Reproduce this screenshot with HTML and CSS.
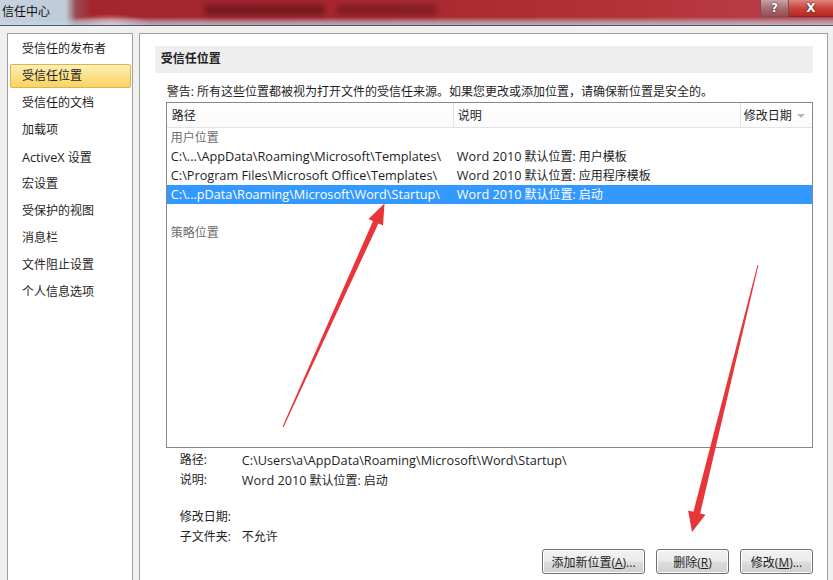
FILE: index.html
```html
<!DOCTYPE html>
<html lang="zh-CN">
<head>
<meta charset="utf-8">
<title>信任中心</title>
<link rel="stylesheet" href="styles.css">
</head>
<body>
<div class="titlebar">
  <span class="title">信任中心</span>
  <div class="behind"><div class="behind-text a"></div><div class="behind-text b"></div></div>
  <div class="caption-btns">
    <div class="cb help">?</div>
    <div class="cb close">X</div>
  </div>
</div>
<div class="main">
  <nav class="side">
    <div class="nav-item">受信任的发布者</div>
    <div class="nav-item active">受信任位置</div>
    <div class="nav-item">受信任的文档</div>
    <div class="nav-item">加载项</div>
    <div class="nav-item"><span class="lat">ActiveX</span> 设置</div>
    <div class="nav-item">宏设置</div>
    <div class="nav-item">受保护的视图</div>
    <div class="nav-item">消息栏</div>
    <div class="nav-item">文件阻止设置</div>
    <div class="nav-item">个人信息选项</div>
  </nav>
  <section class="content">
    <div class="section-head">受信任位置</div>
    <p class="warning">警告: 所有这些位置都被视为打开文件的受信任来源。如果您更改或添加位置，请确保新位置是安全的。</p>
    <div class="table">
      <div class="thead">
        <div class="th c1">路径</div>
        <div class="th c2">说明</div>
        <div class="th c3">修改日期<span class="sort"></span></div>
      </div>
      <div class="tbody">
        <div class="group">用户位置</div>
        <div class="row"><div class="c1 lat">C:\...\AppData\Roaming\Microsoft\Templates\</div><div class="c2"><span class="lat">Word 2010</span> 默认位置: 用户模板</div><div class="c3"></div></div>
        <div class="row"><div class="c1 lat">C:\Program Files\Microsoft Office\Templates\</div><div class="c2"><span class="lat">Word 2010</span> 默认位置: 应用程序模板</div><div class="c3"></div></div>
        <div class="row selected"><div class="c1 lat">C:\...pData\Roaming\Microsoft\Word\Startup\</div><div class="c2"><span class="lat">Word 2010</span> 默认位置: 启动</div><div class="c3"></div></div>
        <div class="row"></div>
        <div class="group">策略位置</div>
      </div>
    </div>
    <div class="details">
      <div class="drow"><span class="dl">路径:</span><span class="lat">C:\Users\a\AppData\Roaming\Microsoft\Word\Startup\</span></div>
      <div class="drow"><span class="dl">说明:</span><span><span class="lat">Word 2010</span> 默认位置: 启动</span></div>
      <div class="drow gap"><span class="dl">修改日期:</span><span></span></div>
      <div class="drow"><span class="dl">子文件夹:</span><span>不允许</span></div>
    </div>
    <div class="buttons">
      <button class="btn wide">添加新位置(<u>A</u>)...</button>
      <button class="btn">删除(<u>R</u>)</button>
      <button class="btn">修改(<u>M</u>)...</button>
    </div>
  </section>
</div>
<svg class="arrows" width="833" height="580" viewBox="0 0 833 580">
  <polygon fill="#e8353a" points="283.5,427.2 378.4,223.4 383,225.5 384.5,203.5 368.4,218.9 373,221 282.5,426.8"/>
  <polygon fill="#e8353a" points="758.5,265.1 700.2,513.4 705.5,514.8 692,532 688.1,510.4 693.4,511.8 757.5,264.9"/>
</svg>
</body>
</html>
```

FILE: styles.css
```css
* { box-sizing: border-box; }

body {
  margin: 0;
  width: 833px;
  height: 580px;
  overflow: hidden;
  position: relative;
  background: #f0f0f0;
  font-family: "Open Sans", "Noto Sans CJK SC", sans-serif;
  font-size: 12px;
  color: #1e1e1e;
}

.lat { font-size: 12.7px; }

/* title bar */
.titlebar {
  height: 26px;
  display: flex;
  align-items: flex-start;
  border-bottom: 1px solid #4a5868;
  background:
    linear-gradient(to bottom, rgba(255,255,255,0) 0, rgba(255,255,255,0) 17px, rgba(190,205,222,0.5) 21px, rgba(200,214,230,0.75) 25px),
    radial-gradient(ellipse 40px 10px at 110px 24px, rgba(255,235,235,0.7), rgba(255,235,235,0)),
    linear-gradient(to right, #c8d3df 0, #bdcad8 66px, #9a4a54 76px, #a3262f 92px, #a8272f 45%, #b3323a 75%, #bb4048 100%);
}
.title {
  padding: 3px 0 0 2px;
  line-height: 17px;
  font-size: 12px;
  color: #111;
}
.behind {
  flex: 1;
  display: flex;
  padding: 5px 0 0 155px;
}
.behind-text {
  height: 10px;
  background: #4e0f15;
  filter: blur(3px);
  opacity: 0.6;
}
.behind-text.a { width: 120px; }
.behind-text.b { width: 100px; margin-left: 12px; opacity: 0.45; }
.caption-btns {
  display: flex;
}
.cb {
  height: 17px;
  line-height: 16px;
  text-align: center;
  font-family: "DejaVu Sans", sans-serif;
  font-weight: bold;
  font-size: 12px;
  color: #fff;
  text-shadow: 0 0 2px #333, 0 0 1px #222;
}
.help {
  width: 29px;
  border: 1px solid #6d5356;
  border-top: 0;
  border-radius: 0 0 0 4px;
  background: linear-gradient(#c9a3a6, #a66b70 55%, #9b4e55);
}
.close {
  width: 44px;
  border-bottom: 1px solid #7a2a2a;
  background: linear-gradient(#e0877f, #c9453c 50%, #b8281f);
}

/* main */
.main {
  display: flex;
  gap: 6px;
  padding: 7px 5px 0 7px;
}
.side {
  width: 126px;
  height: 560px;
  background: #fff;
  border: 1px solid #a0a0a0;
  padding: 3px 1px 0 2px;
  display: flex;
  flex-direction: column;
  gap: 3px;
}
.nav-item {
  height: 24px;
  line-height: 22px;
  padding-left: 11px;
  border: 1px solid transparent;
  border-radius: 2px;
  color: #1e1e1e;
}
.nav-item.active {
  background: linear-gradient(#fdf0b6, #fbe08a 50%, #f8d463);
  border-color: #dcb34f;
}

.content {
  width: 690px;
  height: 560px;
  background: #fff;
  border: 1px solid #a0a0a0;
  padding: 12px 14px 0 27px;
}
.section-head {
  height: 27px;
  line-height: 26px;
  margin-left: -12px;
  padding-left: 6px;
  background: #eeeeef;
  font-weight: bold;
  color: #222;
}
.warning {
  margin: 10px 0 0 0;
  line-height: 18px;
  height: 19px;
}

.table {
  width: 647px;
  height: 346px;
  border: 1px solid #828790;
  margin-left: -1px;
}
.thead {
  display: flex;
  height: 25px;
  border-bottom: 1px solid #e3e3e3;
  background: linear-gradient(#ffffff, #fbfbfb);
}
.th {
  line-height: 24px;
  padding-top: 1px;
  border-right: 1px solid #e3e3e3;
  color: #1e1e1e;
}
.c1 { width: 287px; padding-left: 4px; flex: none; white-space: nowrap; }
.c2 { width: 287px; padding-left: 3px; flex: none; white-space: nowrap; }
.c3 { flex: 1; padding-left: 3px; }
.th.c1 { padding-left: 5px; }
.th.c2 { padding-left: 4px; }
.th.c3 { border-right: 0; position: relative; }
.sort {
  position: absolute;
  right: 7px;
  top: 11px;
  border-left: 4px solid transparent;
  border-right: 4px solid transparent;
  border-top: 4px solid #b5b5b5;
}
.tbody { display: flex; flex-direction: column; }
.group, .row {
  height: 19px;
  line-height: 19px;
}
.group {
  padding-left: 4px;
  color: #6d6d6d;
}
.row { display: flex; }
.row.selected {
  background: #3399ff;
  color: #fff;
}

.details {
  padding-left: 13px;
  padding-top: 2px;
}
.drow {
  display: flex;
  height: 20px;
  line-height: 20px;
}
.drow.gap { margin-top: 17px; }
.dl { width: 62px; flex: none; }

.buttons {
  display: flex;
  justify-content: flex-end;
  gap: 11px;
  margin-top: 2px;
}
.btn {
  width: 73px;
  height: 25px;
  padding: 0;
  font: inherit;
  color: #1e1e1e;
  border: 1px solid #707070;
  border-radius: 3px;
  background: linear-gradient(#f2f2f2 0, #ebebeb 49%, #dddddd 51%, #cfcfcf 100%);
  box-shadow: inset 0 0 0 1px #fcfcfc;
}
.btn.wide { width: 103px; }

.arrows {
  position: absolute;
  left: 0;
  top: 0;
  pointer-events: none;
}
```
